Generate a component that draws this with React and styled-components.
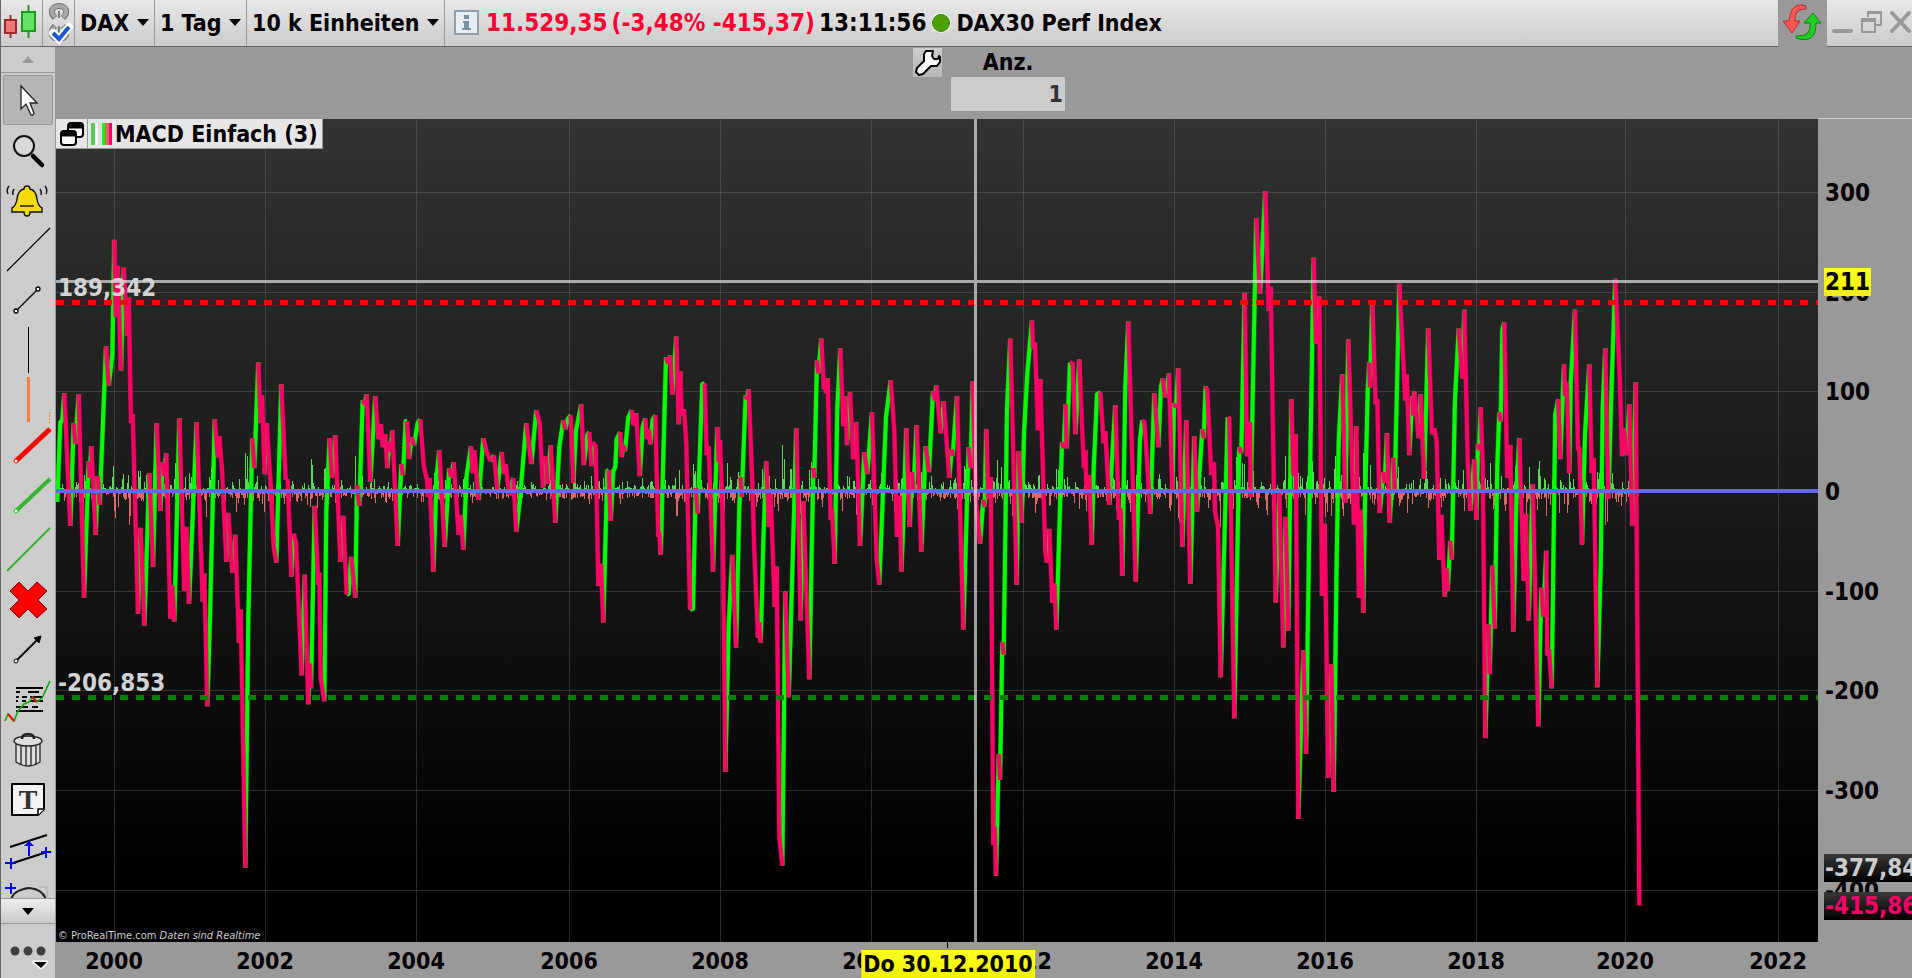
import React from "react";
import styled, { createGlobalStyle } from "styled-components";

const GlobalStyle = createGlobalStyle`
* { box-sizing: border-box; }
body {
margin: 0;
background: #999;
font-family: "DejaVu Sans Condensed", "DejaVu Sans", sans-serif;
font-size: 23px;
font-weight: bold;
color: #000;
}
button, select, input { font: inherit; color: inherit; }
button {
padding: 0;
border: 0;
background: transparent;
cursor: pointer;
}
svg { display: block; flex: none; }
`

const Window = styled.div`
display: flex;
flex-direction: column;
height: 100vh;
border-left: 1px solid #666;
overflow: hidden;
`
const TopBar = styled.header`
display: flex;
flex: none;
height: 47px;
border-bottom: 1px solid #666;
background: linear-gradient(#e7e7e7, #cccccc);
white-space: nowrap;
`
const BarButton = styled.button`
display: flex;
align-items: center;
justify-content: center;
width: ${(p) => p.$width}px;
border-right: 1px solid #999;
`
const DropDown = styled.label`
display: flex;
align-items: center;
gap: 7px;
padding: 0 5px 1px;
border-right: 1px solid #999;
`
const DropSelect = styled.select`
appearance: none;
border: 0;
padding: 0;
background: transparent;
line-height: 28px;
`
const Quote = styled.div`
display: flex;
flex: 1;
align-items: center;
gap: 4px;
padding: 0 0 1px 9px;
font-size: 24px;
`
const Price = styled.span`
color: #ff0033;
`
const QuoteIcon = styled.svg`
margin-right: 3px;
`
const IndexName = styled.span`
font-size: 23px;
`
const Dot = styled.span`
width: 18px;
height: 18px;
margin: 0 2px;
border-radius: 50%;
background: #4ca000;
border: 1px solid #2d8a00;
box-shadow: 0 0 0 1px #f4f4f4;
`
const RefreshButton = styled.button`
display: flex;
align-items: center;
justify-content: center;
width: 49px;
height: 47px;
background: #999;
`
const WindowButtons = styled.div`
display: flex;
align-items: center;
gap: 8px;
padding: 0 1px 2px 5px;
`
const Body = styled.div`
display: flex;
flex: 1;
min-height: 0;
`
const Tools = styled.nav`
display: flex;
flex-direction: column;
flex: none;
width: 55px;
background: #ccc;
border-right: 1px solid #999;
`
const ScrollButton = styled.button`
display: flex;
flex: none;
align-items: center;
justify-content: center;
height: 26px;
border-bottom: 1px solid #999;
border-top: ${(p) => (p.$raised ? "1px solid #999" : "0")};
background: ${(p) => (p.$raised ? "linear-gradient(#eee, #c8c8c8)" : "#ccc")};
`
const ToolList = styled.div`
flex: 1;
min-height: 0;
overflow: hidden;
padding: 2px;
`
const Tool = styled.button`
display: flex;
align-items: center;
justify-content: center;
width: 50px;
height: 50px;
border: 1px solid ${(p) => (p.$active ? "#999" : "transparent")};
border-radius: 2px;
background: ${(p) => (p.$active ? "#b5b5b5" : "transparent")};
`
const MoreButton = styled.button`
display: flex;
flex: none;
align-items: center;
justify-content: center;
height: 54px;
`
const Main = styled.main`
display: flex;
flex-direction: column;
flex: 1;
min-width: 0;
`
const OrderBar = styled.div`
display: flex;
flex: none;
justify-content: center;
gap: 9px;
height: 72px;
padding-left: 10px;
`
const WrenchButton = styled.button`
width: 29px;
height: 29px;
margin-top: 1px;
background: linear-gradient(#ccc, #b8b8b8);
`
const Amount = styled.label`
display: flex;
flex-direction: column;
width: 114px;
text-align: center;
line-height: 30px;
`
const AmountInput = styled.input`
width: 114px;
height: 34px;
padding: 0 2px;
border: 0;
background: #ccc;
color: #333;
text-align: right;
`
const ChartGrid = styled.div`
display: grid;
flex: 1;
min-height: 0;
grid-template-columns: minmax(0, 1fr) 94px;
grid-template-rows: minmax(0, 1fr) 36px;
`
const Plot = styled.section`
position: relative;
overflow: hidden;
background: linear-gradient(#333, #000 92%);
> svg {
  width: 100%;
  height: 100%;
}
`
const TitleTag = styled.div`
position: absolute;
top: 0;
left: 0;
display: flex;
align-items: center;
height: 30px;
padding-right: 4px;
border: 1px solid #999;
border-width: 0 1px 1px 0;
background: #e6e6e6;
line-height: 28px;
white-space: nowrap;
`
const TitleButton = styled.button`
display: flex;
align-items: center;
justify-content: center;
width: 32px;
height: 29px;
margin-right: 3px;
border-right: 1px solid #999;
`
const LevelLabel = styled.span`
position: absolute;
left: 2px;
color: #d2d2d2;
font-size: 24px;
line-height: 28px;
transform: translateY(-100%);
`
const Credits = styled.small`
position: absolute;
left: 2px;
bottom: 0;
color: #ccc;
font-size: 11px;
font-weight: normal;
line-height: 12px;
`
const PriceAxis = styled.aside`
position: relative;
overflow: hidden;
border-top: 1px solid #ccc;
margin-top: -1px;
`
const PriceLabel = styled.span`
position: absolute;
left: 6px;
margin-top: 1px;
padding: 0 1px;
font-size: 24px;
line-height: 28px;
transform: translateY(-50%);
color: ${(p) => p.$color || "#000"};
background: ${(p) => p.$background || "none"};
`
const TimeAxis = styled.footer`
position: relative;
overflow: hidden;
`
const TimeLabel = styled.span`
position: absolute;
top: 5px;
line-height: 28px;
transform: translateX(-50%);
`
const TimeTick = styled.i`
position: absolute;
top: 0;
width: 1px;
height: 6px;
background: #000;
`
const DateTag = styled.span`
position: absolute;
top: 8px;
padding: 0 2px;
line-height: 28px;
white-space: nowrap;
background: linear-gradient(#ffff22, #f0f000);
transform: translateX(-50%);
`

const WIDTH = 1762;
const HEIGHT = 823;
const yOf = (value) => 372 - value * 0.9964;
const percentY = (value) => `${(yOf(value) / HEIGHT) * 100}%`;
const percentX = (x) => `${(x / WIDTH) * 100}%`;

const years = [
  [2000, 58], [2002, 209], [2004, 360], [2006, 513], [2008, 664], [2010, 815],
  [2012, 967], [2014, 1118], [2016, 1269], [2018, 1420], [2020, 1569], [2022, 1722],
];
const levels = [300, 200, 100, 0, -100, -200, -300, -400];

// time step (three per unit of width), indicator value
const macd = [
  4,-11, 13,69, 19,71, 25,98, 43,-35, 53,68, 58,47, 68,97, 84,-107, 98,30, 101,13, 106,45, 119,-44, 125,15,
  131,-14, 150,145, 158,106, 169,136, 175,252, 179,175, 185,226, 195,121, 203,224, 214,156, 218,194, 225,68,
  230,77, 246,-123, 254,-37, 265,-135, 280,18, 291,-76, 302,68, 313,-20, 320,29, 324,15, 331,38, 343,-128,
  349,-95, 355,-131, 370,73, 385,-100, 391,-36, 399,-113, 422,69, 440,-111, 445,-83, 454,-216, 462,-127,
  476,72, 485,34, 490,55, 498,22, 511,-71, 517,-22, 529,-82, 538,-44, 549,-152, 554,-119, 568,-378, 577,-127,
  589,53, 595,23, 607,129, 614,68, 618,96, 626,17, 632,68, 644,6, 653,-56, 661,-72, 676,107, 689,11, 695,12,
  706,-86, 713,-43, 720,-52, 737,-185, 746,-84, 757,-214, 761,-173, 765,-198, 776,-15, 787,-94, 790,-82,
  794,-188, 805,-211, 811,-20, 821,53, 828,13, 838,56, 853,-71, 862,-25, 872,-104, 878,-103, 886,-66,
  898,-107, 903,6, 910,-15, 920,91, 926,87, 932,97, 943,9, 958,95, 967,52, 975,67, 980,44, 988,57, 994,23,
  1000,50, 1004,39, 1009,61, 1025,-55, 1036,27, 1041,16, 1049,70, 1053,70, 1059,32, 1067,54, 1074,46,
  1085,68, 1093,72, 1103,26, 1113,11, 1116,-6, 1121,13, 1132,-81, 1142,16, 1150,41, 1166,-56, 1180,23,
  1185,14, 1193,29, 1208,-44, 1214,-24, 1222,-59, 1232,16, 1245,45, 1250,18, 1255,41, 1268,-9, 1282,53,
  1292,39, 1304,30, 1314,36, 1324,2, 1337,39, 1344,17, 1349,27, 1360,-4, 1372,13, 1381,-41, 1392,-8,
  1411,68, 1426,27, 1441,81, 1451,68, 1461,3, 1469,35, 1475,7, 1484,46, 1498,-32, 1510,44, 1522,71, 1528,62,
  1535,72, 1544,76, 1552,8, 1560,61, 1576,87, 1583,26, 1594,56, 1600,59, 1606,25, 1610,49, 1619,45,
  1627,-95, 1635,-73, 1642,-132, 1654,20, 1658,21, 1664,-30, 1672,20, 1678,24, 1682,52, 1693,59, 1697,34,
  1702,46, 1707,40, 1717,74, 1727,81, 1732,66, 1741,78, 1751,15, 1760,64, 1768,73, 1772,52, 1778,62,
  1783,47, 1790,72, 1798,76, 1807,-46, 1810,-41, 1814,-64, 1830,134, 1837,128, 1843,136, 1849,97, 1861,155,
  1868,67, 1873,120, 1877,76, 1884,82, 1891,48, 1902,-119, 1911,-118, 1919,3, 1925,-23, 1939,107, 1946,108,
  1952,36, 1958,45, 1971,-81, 1984,64, 1988,29, 1992,51, 2000,-26, 2008,-282, 2018,-134, 2029,-64,
  2040,-157, 2050,-17, 2054,14, 2057,-6, 2069,96, 2073,92, 2078,102, 2089,9, 2095,-60, 2106,-147, 2110,-132,
  2114,-152, 2122,-52, 2131,30, 2139,-36, 2144,-3, 2156,-116, 2162,-76, 2170,-347, 2179,-376, 2188,-101,
  2198,-207, 2210,-69, 2221,63, 2234,-130, 2242,-10, 2260,-189, 2272,23, 2275,13, 2283,131, 2287,118,
  2296,153, 2304,102, 2307,113, 2311,98, 2315,113, 2324,-29, 2328,-18, 2336,-73, 2344,83, 2353,143, 2362,65,
  2367,95, 2373,46, 2382,99, 2392,32, 2401,69, 2412,-55, 2425,39, 2434,17, 2448,79, 2462,-69, 2470,-94,
  2478,-26, 2490,74, 2504,111, 2515,61, 2523,-46, 2531,-5, 2536,-81, 2542,-32, 2551,63, 2561,-36, 2568,19,
  2572,-2, 2582,66, 2596,-61, 2609,45, 2619,19, 2631,100, 2636,91, 2641,106, 2654,58, 2663,90, 2680,13,
  2687,42, 2690,35, 2703,95, 2722,-139, 2734,0, 2738,44, 2744,23, 2750,110, 2760,-10, 2772,-53, 2782,-9,
  2786,-16, 2791,62, 2797,-8, 2804,14, 2812,-355, 2816,-337, 2820,-386, 2828,-264, 2832,-290, 2839,-152,
  2843,-164, 2853,83, 2863,153, 2882,-94, 2888,40, 2897,-32, 2904,57, 2914,118, 2928,171, 2931,143, 2937,149,
  2946,61, 2953,112, 2968,-62, 2973,-72, 2980,-38, 2989,-112, 2995,-93, 3001,-139, 3018,49, 3023,43,
  3029,87, 3032,43, 3042,129, 3050,128, 3058,57, 3070,132, 3078,66, 3084,23, 3088,41, 3092,-4, 3099,16,
  3107,-54, 3113,22, 3123,97, 3133,99, 3143,48, 3148,60, 3160,-14, 3178,86, 3189,-29, 3194,-18, 3199,-85,
  3208,105, 3217,170, 3239,-91, 3252,52, 3259,71, 3265,69, 3269,52, 3283,-23, 3295,98, 3307,44, 3315,105,
  3320,113, 3327,94, 3339,118, 3349,0, 3354,88, 3360,84, 3367,123, 3379,-56, 3391,71, 3403,-93, 3415,55,
  3423,-21, 3439,62, 3443,53, 3449,105, 3454,101, 3466,16, 3474,29, 3477,-21, 3486,-36, 3494,-187, 3515,74,
  3520,73, 3535,-228, 3550,44, 3556,38, 3566,199, 3573,35, 3582,69, 3584,-6, 3601,274, 3612,198, 3628,301,
  3638,181, 3644,205, 3651,59, 3659,-112, 3670,0, 3682,-157, 3689,-26, 3697,-140, 3706,92, 3712,16, 3719,57,
  3727,-329, 3742,-160, 3750,-264, 3762,16, 3773,234, 3780,148, 3790,195, 3798,-105, 3806,-33, 3817,-288,
  3826,-174, 3833,-302, 3842,-68, 3848,50, 3859,117, 3868,-12, 3877,152, 3894,-34, 3901,65, 3909,-107,
  3914,-19, 3922,-122, 3926,-26, 3935,101, 3940,129, 3942,104, 3949,190, 3959,87, 3964,92, 3971,-22,
  3982,19, 3986,8, 3993,58, 4001,-32, 4012,33, 4016,2, 4030,208, 4048,91, 4052,117, 4060,36, 4069,95,
  4072,76, 4075,100, 4088,53, 4094,97, 4104,12, 4117,163, 4128,57, 4135,63, 4142,50, 4150,-69, 4156,-24,
  4166,-106, 4172,-78, 4175,-100, 4183,-50, 4187,-69, 4197,92, 4208,163, 4219,113, 4225,182, 4235,31,
  4243,-20, 4255,32, 4261,-29, 4266,47, 4269,41, 4274,84, 4280,26, 4288,-248, 4298,-134, 4301,-184,
  4309,-75, 4316,-138, 4324,26, 4330,79, 4334,70, 4339,161, 4345,169, 4354,13, 4363,46, 4372,-141, 4382,6,
  4390,53, 4403,-90, 4410,-23, 4418,-130, 4430,7, 4447,-236, 4456,-97, 4462,-126, 4471,-60, 4474,-165,
  4479,-159, 4487,-198, 4498,77, 4507,92, 4513,32, 4524,127, 4527,95, 4532,109, 4540,18, 4544,108, 4557,182,
  4566,41, 4570,44, 4578,-54, 4587,57, 4600,127, 4607,18, 4613,33, 4624,-197, 4634,-76, 4640,82, 4648,143,
  4657,-8, 4667,108, 4678,213, 4692,108, 4698,35, 4704,63, 4712,36, 4720,87, 4729,-35, 4739,109, 4750,-416,
];

const buildPaths = () => {
  let up = "";
  let down = "";
  let upBars = "";
  let downBars = "";
  let last = "";
  for (let i = 2; i < macd.length; i += 2) {
    const [t0, v0, t1, v1] = macd.slice(i - 2, i + 2);
    const dir = v1 >= v0 ? "up" : "down";
    const from = `M${(t0 / 3).toFixed(1)} ${yOf(v0).toFixed(1)}`;
    const to = `L${(t1 / 3).toFixed(1)} ${yOf(v1).toFixed(1)}`;
    const part = dir === last ? to : from + to;
    if (dir === "up") up += part;
    else down += part;
    last = dir;

    const slope = Math.min(26, Math.abs(v1 - v0) / (t1 - t0));
    for (let x = Math.round(t0 / 3); x < Math.round(t1 / 3); x++) {
      const noise = Math.abs(Math.sin(x * 12.9898) * 43758.5453) % 1;
      const size = 2 + (slope + 2) * (0.1 + noise * noise * 1.6);
      if (dir === "up") upBars += `M${x + 0.5} 372v${-size.toFixed(0)}`;
      else downBars += `M${x + 0.5} 372v${size.toFixed(0)}`;
      if (noise > 0.7) downBars += `M${x + 0.5} 372v${(noise * 8).toFixed(0)}`;
    }
  }
  return { up, down, upBars, downBars };
};
const paths = buildPaths();

const Caret = () => (
  <svg width="12" height="7"><path d="M0 0h12L6 7z" fill="#000" /></svg>
);

const CaretUp = () => (
  <svg width="12" height="7"><path d="M0 7h12L6 0z" fill="#999" /></svg>
);

const Chart = () => (
  <svg viewBox={`0 0 ${WIDTH} ${HEIGHT}`} preserveAspectRatio="none" role="img" aria-label="MACD Einfach">
    <g stroke="#777" strokeOpacity="0.34" strokeWidth="1">
      {years.map(([year, x]) => <path key={year} d={`M${x + 0.5} 0V${HEIGHT}`} />)}
      {levels.map((v) => <path key={v} d={`M0 ${Math.round(yOf(v)) + 0.5}H${WIDTH}`} />)}
    </g>
    <g fill="none" strokeWidth="1">
      <path d={paths.upBars} stroke="#5bd75b" />
      <path d={paths.downBars} stroke="#dc6868" />
    </g>
    <g fill="none" strokeLinejoin="round">
      <path d={paths.up} stroke="#00ff00" strokeOpacity="0.4" strokeWidth="5" />
      <path d={paths.up} stroke="#00ff00" strokeWidth="4" />
      <path d={paths.down} stroke="#ff0066" strokeOpacity="0.4" strokeWidth="5" />
      <path d={paths.down} stroke="#ff0066" strokeWidth="4" />
    </g>
    <path d={`M0 183.5H${WIDTH}`} stroke="#ff0000" strokeWidth="5" strokeDasharray="8 8" />
    <path d={`M0 578.5H${WIDTH}`} stroke="#008000" strokeWidth="5" strokeDasharray="8 8" />
    <path d={`M0 372H${WIDTH}`} stroke="#6666ff" strokeWidth="4" />
    <path d={`M0 162.5H${WIDTH}M919.5 0V${HEIGHT}`} stroke="#fff" strokeOpacity="0.6" strokeWidth="3" />
  </svg>
);

const tools = [
  ["Zeiger", <path d="M18 11v23l5-5 5 11q2 1 3-2l-4-10h7z" fill="#fff" stroke="#222" strokeWidth="1.3" />],
  ["Lupe", <g><path d="M30 31l9 9" stroke="#000" strokeWidth="4.5" strokeLinecap="round" /><circle cx="21" cy="21" r="10" fill="#d8d8d8" stroke="#111" strokeWidth="2" /></g>],
  ["Alarm", <g fill="none" stroke="#111" strokeWidth="1.4">
    <path d="M9 37v-4q4-2 5-9 1-9 7-10 0-3 3-3t3 3q6 1 7 10 1 7 5 9v4H27q0 4-3 4t-3-4z" fill="#f5dc00" />
    <path d="M17 31h14" /><path d="M6 11q-3 4-1 8M11 14q-2 3-1 6M42 11q3 4 1 8M37 14q2 3 1 6" />
  </g>],
  ["Linie", <path d="M4 46L47 3" stroke="#000" strokeWidth="1.2" />],
  ["Strecke", <g stroke="#000" strokeWidth="1.3"><path d="M13 36l22-22" /><circle cx="13" cy="36" r="2" fill="#fff" /><circle cx="35" cy="14" r="2" fill="#fff" /></g>],
  ["Vertikale", <path d="M25.5 2v46" stroke="#000" />],
  ["Vertikale orange", <g stroke="#ff7f40"><path d="M25.5 2v45" strokeWidth="3" /><path d="M46.5 37v11" strokeDasharray="2 1" /></g>],
  ["Rote Strecke", <g><path d="M13 36L47 4" stroke="#f00" strokeWidth="5" /><circle cx="13" cy="36" r="2" fill="#fff" stroke="#f00" /></g>],
  ["Grüne Strecke", <g><path d="M13 36L47 4" stroke="#33b533" strokeWidth="4" /><circle cx="13" cy="36" r="2" fill="#fff" stroke="#33b533" /></g>],
  ["Grüne Linie", <path d="M4 46L47 3" stroke="#33b533" strokeWidth="2" />],
  ["Löschen", <path d="M16 7l9 9 9-9 10 9-9 9 9 9-10 9-9-9-9 9-9-9 9-9-9-9z" fill="#f00" stroke="#800" strokeWidth="1" />],
  ["Pfeil", <g><path d="M13 36l24-24" stroke="#000" strokeWidth="1.8" /><path d="M38 11l-7 2 5 5z" stroke="#000" /><circle cx="13" cy="36" r="2" fill="#fff" stroke="#000" /></g>],
  ["Indikator", <g fill="none" strokeWidth="2">
    <path d="M13 13h27M13 36h27" stroke="#000" /><path d="M13 17h4m8 0h11M13 22h3m3 0h5m3 0h12M13 26h2m4 0h4m4 0h13M13 32h12m4 0h6" stroke="#000" />
    <path d="M2 46l3-7 6 7 4-10 6-7 5-2 4-5 4 5 5-4 8-17" stroke="#0a0" strokeWidth="1.6" /><path d="M5 39l6 7M29 22l4 5" stroke="#f00" />
  </g>],
  ["Papierkorb", <g stroke="#222" strokeWidth="1.3" fill="#ddd">
    <path d="M13 17v20q12 8 24 0V17" /><path d="M18 21v18m5-18v20m5-20v20m5-20v18" /><ellipse cx="25" cy="16" rx="14" ry="5" /><path d="M19 14q0-5 6-5t6 5" fill="none" strokeWidth="2.5" />
  </g>],
  ["Text", <g><path d="M9 9h32v25l-6 6H9z" fill="#f2f2f2" stroke="#000" strokeWidth="2" strokeLinejoin="round" /><path d="M41 34h-6v6" fill="#fff" stroke="#000" strokeWidth="1.5" /><text x="25" y="34" textAnchor="middle" fontFamily="Liberation Serif" fontSize="28" fill="#333">T</text></g>],
  ["Kanal", <g fill="none" strokeWidth="2"><path d="M7 22l37-12M7 39l37-12" stroke="#000" /><path d="M2 38h11M8 33v11M38 27h10M43 22v11M26 31V21" stroke="#00f" /><path d="M21 21h10l-5-5z" fill="#00f" stroke="none" /></g>],
  ["Bogen", <g fill="none" strokeWidth="2"><path d="M36 12h8v10" stroke="#aaa" strokeWidth="1" /><path d="M8 25q2-10 18-12 14 1 17 12" stroke="#222" /><path d="M2 13h11M8 8v11" stroke="#00f" /></g>],
];

const Sidebar = () => (
  <Tools>
    <ScrollButton aria-label="Nach oben"><CaretUp /></ScrollButton>
    <ToolList>
      {tools.map(([name, icon], i) => (
        <Tool key={name} aria-label={name} $active={i === 0}>
          <svg width="50" height="50">{icon}</svg>
        </Tool>
      ))}
    </ToolList>
    <ScrollButton aria-label="Nach unten" $raised><Caret /></ScrollButton>
    <MoreButton aria-label="Mehr">
      <svg width="50" height="54">
        <g fill="#404040"><circle cx="12" cy="27" r="4.5" /><circle cx="25" cy="27" r="4.5" /><circle cx="38" cy="27" r="4.5" /></g>
        <path d="M31 38h13l-6 6z" stroke="#fff" strokeWidth="3" strokeLinejoin="round" /><path d="M31 38h13l-6 6z" />
      </svg>
    </MoreButton>
  </Tools>
);

const Header = () => (
  <TopBar>
    <BarButton $width={42} aria-label="Kerzenchart">
      <svg width="40" height="46">
        <path d="M8.5 15v23" stroke="#a02828" strokeWidth="2" /><path d="M3 20h11v13H3z" fill="#ee7777" stroke="#a02828" strokeWidth="2" />
        <path d="M26.500 5v33" stroke="#1c9a1c" strokeWidth="2" /><path d="M20 12h13v19H20z" fill="#66e066" stroke="#1c9a1c" strokeWidth="2" />
      </svg>
    </BarButton>
    <BarButton $width={32} aria-label="Verknüpfung">
      <svg width="30" height="46" fill="none">
        <g stroke="#777" strokeWidth="6">
          <path d="M11 18Q7 14 8 10 10 6 15 6t7 4q1 4-3 8" />
          <path d="M11 26Q7 30 8 35 10 39 15 39t7-4q1-5-3-9" />
        </g>
        <g stroke="#a8a8a8" strokeWidth="4">
          <path d="M11 17Q7 14 8 10 10 6 15 6t7 4q1 4-3 7" />
          <path d="M11 27Q7 30 8 35 10 39 15 39t7-4q1-5-3-8" />
        </g>
        <path d="M15 11v7M15 26v7" stroke="#777" strokeWidth="2" />
        <path d="M9 33l6 6L25 27" stroke="#fff" strokeWidth="8" strokeLinecap="round" /><path d="M9 33l6 6L25 27" stroke="#1858d8" strokeWidth="4" />
      </svg>
    </BarButton>
    {["DAX", "1 Tag", "10 k Einheiten"].map((name) => (
      <DropDown key={name}>
        <DropSelect aria-label={name}><option>{name}</option></DropSelect>
        <Caret />
      </DropDown>
    ))}
    <Quote>
      <QuoteIcon width="25" height="25">
        <path d="M1 1h23v23H1z" fill="#e8eef2" stroke="#8fa0aa" strokeWidth="2" />
        <path d="M10 5h5v4h-5zM9 11h6v7h2v2H8v-2h2v-5H9z" fill="#7b929e" />
      </QuoteIcon>
      <Price>11.529,35</Price>
      <Price>(-3,48% -415,37)</Price>
      <span>13:11:56</span>
      <Dot />
      <IndexName>DAX30 Perf Index</IndexName>
    </Quote>
    <RefreshButton aria-label="Aktualisieren">
      <svg width="46" height="44" strokeWidth="1">
        <path d="M26 4Q11-1 9 19H3l9 12 8-12h-5Q14 7 26 7z" fill="#ff5555" stroke="#b03030" />
        <path d="M16 36q20 7 20-15h5L33 11l-9 10h6q2 14-14 13z" fill="#22cc22" stroke="#108010" />
      </svg>
    </RefreshButton>
    <WindowButtons>
      <button aria-label="Minimieren"><svg width="21" height="26"><path d="M2 22h17" stroke="#999" strokeWidth="4" strokeLinecap="round" /></svg></button>
      <button aria-label="Wiederherstellen"><svg width="21" height="26" fill="none" stroke="#999" strokeWidth="2"><path d="M7 8V3h13v13h-5M7 4h13M1 10h13v13H1zM1 12h13" /></svg></button>
      <button aria-label="Schließen"><svg width="21" height="26"><path d="M2 4l17 18M19 4L2 22" stroke="#999" strokeWidth="4" strokeLinecap="round" /></svg></button>
    </WindowButtons>
  </TopBar>
);

const App = () => (
  <Window>
    <GlobalStyle />
    <Header />
    <Body>
      <Sidebar />
      <Main>
        <OrderBar>
          <WrenchButton aria-label="Einstellungen">
            <svg width="29" height="29">
              <path d="M13 3h7l-1 5 2 3h4l1-3 1 1v5l-3 4h-6l-8 8-4 1-3-3 1-4 7-7V6z" fill="#fff" stroke="#000" strokeWidth="2" strokeLinejoin="round" />
            </svg>
          </WrenchButton>
          <Amount>
            Anz.
            <AmountInput defaultValue="1" />
          </Amount>
        </OrderBar>
        <ChartGrid>
          <Plot>
            <Chart />
            <LevelLabel style={{ top: percentY(189.342) }}>189,342</LevelLabel>
            <LevelLabel style={{ top: percentY(-206.853) }}>-206,853</LevelLabel>
            <TitleTag>
              <TitleButton aria-label="Fenster">
                <svg width="26" height="26" fill="#fff" stroke="#000" strokeWidth="2">
                  <rect x="9" y="2" width="15" height="14" rx="3" /><path d="M9 5h15" strokeWidth="5" />
                  <rect x="2" y="10" width="15" height="14" rx="3" /><path d="M2 13h15" strokeWidth="5" />
                </svg>
              </TitleButton>
              <svg width="24" height="22">
                <path d="M0 0h4v22H0z" fill="#55cc55" /><path d="M4 0h3v22H4z" fill="#fff" /><path d="M7 0h4v22H7z" fill="#ddd" />
                <path d="M11 0h3v22h-3z" fill="#0f0" /><path d="M14 0h4v22h-4z" fill="#dd6666" /><path d="M18 0h3v22h-3z" fill="#f06" />
              </svg>
              MACD Einfach (3)
            </TitleTag>
            <Credits>© ProRealTime.com <em>Daten sind Realtime</em></Credits>
          </Plot>
          <PriceAxis>
            {levels.map((v) => (
              <PriceLabel key={v} style={{ top: percentY(v) }}>{v}</PriceLabel>
            ))}
            <PriceLabel style={{ top: percentY(211) }} $background="linear-gradient(#ffff22, #f0f000)">211</PriceLabel>
            <PriceLabel style={{ top: percentY(-377.84) }} $color="#ccc" $background="linear-gradient(#383838, #000)">-377,84</PriceLabel>
            <PriceLabel style={{ top: percentY(-415.86) }} $color="#ff0066" $background="linear-gradient(#383838, #000)">-415,86</PriceLabel>
          </PriceAxis>
          <TimeAxis>
            {years.map(([year, x]) => (
              <TimeLabel key={year} style={{ left: percentX(x) }}>{year}</TimeLabel>
            ))}
            <TimeTick style={{ left: percentX(891) }} />
            <DateTag style={{ left: percentX(892) }}>Do 30.12.2010</DateTag>
          </TimeAxis>
        </ChartGrid>
      </Main>
    </Body>
  </Window>
);

export default App;
